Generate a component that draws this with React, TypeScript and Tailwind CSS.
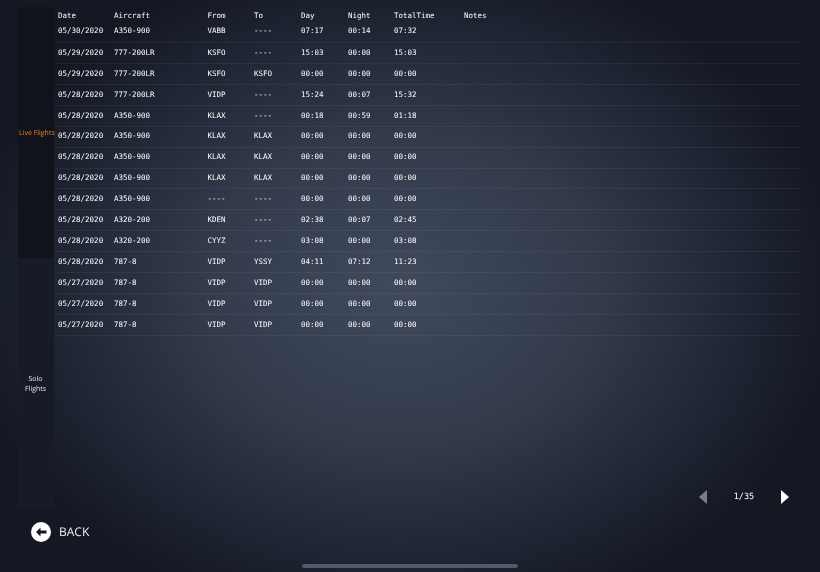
const rows = [
  ["05/30/2020", "A350-900", "VABB", "----", "07:17", "00:14", "07:32"],
  ["05/29/2020", "777-200LR", "KSFO", "----", "15:03", "00:00", "15:03"],
  ["05/29/2020", "777-200LR", "KSFO", "KSFO", "00:00", "00:00", "00:00"],
  ["05/28/2020", "777-200LR", "VIDP", "----", "15:24", "00:07", "15:32"],
  ["05/28/2020", "A350-900", "KLAX", "----", "00:18", "00:59", "01:18"],
  ["05/28/2020", "A350-900", "KLAX", "KLAX", "00:00", "00:00", "00:00"],
  ["05/28/2020", "A350-900", "KLAX", "KLAX", "00:00", "00:00", "00:00"],
  ["05/28/2020", "A350-900", "KLAX", "KLAX", "00:00", "00:00", "00:00"],
  ["05/28/2020", "A350-900", "----", "----", "00:00", "00:00", "00:00"],
  ["05/28/2020", "A320-200", "KDEN", "----", "02:38", "00:07", "02:45"],
  ["05/28/2020", "A320-200", "CYYZ", "----", "03:08", "00:00", "03:08"],
  ["05/28/2020", "787-8", "VIDP", "YSSY", "04:11", "07:12", "11:23"],
  ["05/27/2020", "787-8", "VIDP", "VIDP", "00:00", "00:00", "00:00"],
  ["05/27/2020", "787-8", "VIDP", "VIDP", "00:00", "00:00", "00:00"],
  ["05/27/2020", "787-8", "VIDP", "VIDP", "00:00", "00:00", "00:00"],
];
const head = ["Date", "Aircraft", "From", "To", "Day", "Night", "TotalTime", "Notes"];
const cols = "grid grid-cols-[56px_93.5px_46.5px_47px_47px_46px_70px_1fr] pl-[2px]";

export default function App() {
  return (
    <div className="relative h-[572px] w-[820px] overflow-hidden bg-[radial-gradient(ellipse_440px_340px_at_400px_290px,#414a5d_0%,#323a4c_45%,#1f2533_78%,#141823_100%)] font-['Open_Sans',sans-serif] text-white [text-rendering:geometricPrecision]">
      <div className="flex pl-[18px] pt-[7px]">
        <div className="flex h-[501px] w-[36px] flex-col text-center text-[7px] leading-[10px]">
          <div className="flex h-[251px] items-center justify-center bg-[#10131a] pt-[3px] pl-[1px] text-[#e08a1e] whitespace-nowrap"><span className="will-change-transform">Live Flights</span></div>
          <div className="flex h-[250px] items-center justify-center bg-[#171b26] pt-[4px] text-[#e4e6ea]"><span className="will-change-transform">Solo<br />Flights</span></div>
        </div>
        <div className="ml-[2px] w-[744px] font-['DejaVu_Sans_Mono',monospace] text-[7.5px] leading-[8px] text-white will-change-transform">
          <div className={`${cols} h-[17px] items-center`}>
            {head.map((h) => <div key={h}>{h}</div>)}
          </div>
          {rows.map((r, i) => (
            <div key={i} className={`${cols} items-start border-b border-white/[0.05] ${i === 0 ? "h-[19px] pt-[3px]" : "h-[20.93px] pt-[5.75px]"}`}>
              {r.map((c, j) => <div key={j}>{c}</div>)}
            </div>
          ))}
        </div>
      </div>

      <div className="absolute left-[31px] top-[522px] flex items-center gap-[8px]">
        <svg width="20" height="20" viewBox="0 0 20 20">
          <circle cx="10" cy="10" r="10" fill="#fff" />
          <path d="M5 10 L9.5 5.5 V8.5 H15.5 V11.5 H9.5 V14.5 Z" fill="#141823" />
        </svg>
        <span className="text-[12px] leading-none text-[#eef0f3] will-change-transform">BACK</span>
      </div>

      <div className="absolute left-[699px] top-[490px] flex items-center">
        <svg width="9" height="14" viewBox="0 0 9 14"><path d="M8 0 V14 L0 7 Z" fill="#7c7f86" /></svg>
        <span className="ml-[25px] w-[22px] text-center font-['DejaVu_Sans_Mono',monospace] text-[8.5px] leading-none text-white will-change-transform">1/35</span>
        <svg className="ml-[25px]" width="9" height="14" viewBox="0 0 9 14"><path d="M1 0 V14 L9 7 Z" fill="#fff" /></svg>
      </div>

      <div className="absolute left-[302px] top-[564px] h-[4px] w-[216px] rounded-full bg-[#53586a]" />
    </div>
  );
}
